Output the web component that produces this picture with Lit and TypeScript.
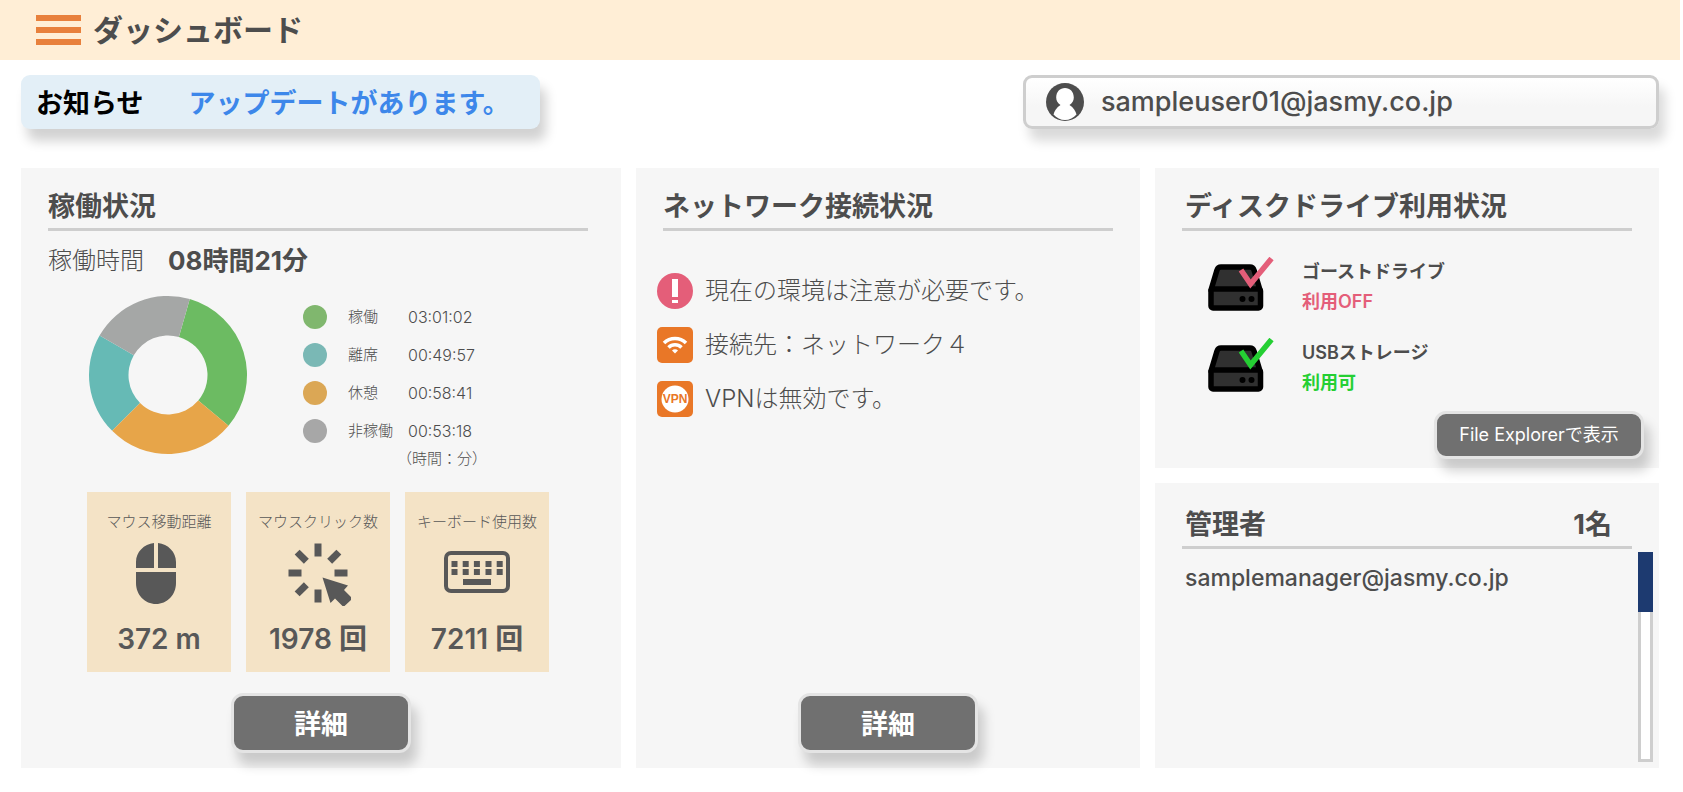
import { LitElement, html, svg, css } from "lit";
import { customElement } from "lit/decorators.js";

const usage = [
  { label: "稼働", time: "03:01:02", start: 16, end: 130, fill: "#6cbb62", dot: "green" },
  { label: "離席", time: "00:49:57", start: 225, end: 300, fill: "#66bab5", dot: "teal" },
  { label: "休憩", time: "00:58:41", start: 130, end: 225, fill: "#e7a549", dot: "amber" },
  { label: "非稼働", time: "00:53:18", start: 300, end: 376, fill: "#a5a7a6", dot: "gray" },
];

const point = (r: number, deg: number) => {
  const a = (deg * Math.PI) / 180;
  return `${(80 + r * Math.sin(a)).toFixed(2)} ${(80 - r * Math.cos(a)).toFixed(2)}`;
};
const slice = (s: number, e: number) =>
  `M${point(79, s)}A79 79 0 0 1 ${point(79, e)}L${point(39.5, e)}A39.5 39.5 0 0 0 ${point(39.5, s)}Z`;

const mouseIcon = html`<svg class="tile-icon" viewBox="0 0 66 66" aria-hidden="true">
  <path d="M28 3v25H10v-6C10 12 18 4 28 3zM32 3c10 1 18 9 18 19v6H32zM10 32h40v11c0 12-9 21-20 21s-20-9-20-21z"/>
</svg>`;
const clickIcon = html`<svg class="tile-icon" viewBox="0 0 66 66" aria-hidden="true">
  <g transform="translate(33 33)">
    ${[0, 45, 90, 180, 225, 270, 315].map(
      (a) => svg`<rect x="-3.500" y="-29.500" width="7" height="13" transform="rotate(${a})"/>`
    )}
    <path d="M4.500 4.500L30 12.500l-4 4.500 8.500 8.500-9 8.500-8.500-8.500-4.500 4.500z"/>
  </g>
</svg>`;
const keyboardIcon = html`<svg class="tile-icon" viewBox="0 0 66 66" aria-hidden="true">
  <rect x="2" y="13" width="62" height="38" rx="5" fill="none" stroke="currentColor" stroke-width="4"/>
  ${[7.500, 18.700, 29.900, 41.500, 52.700].map(
    (x) => svg`<path d="M${x} 21h6v6h-6zM${x} 29h6v6h-6z"/>`
  )}
  <path d="M19 39h28v6H19z"/>
</svg>`;

const activity = [
  { label: "マウス移動距離", value: "372 m", icon: mouseIcon },
  { label: "マウスクリック数", value: "1978 回", icon: clickIcon },
  { label: "キーボード使用数", value: "7211 回", icon: keyboardIcon },
];

const drives = [
  { name: "ゴーストドライブ", state: "利用OFF", tone: "off" },
  { name: "USBストレージ", state: "利用可", tone: "on" },
];

@customElement("app-root")
export class AppRoot extends LitElement {
  static styles = css`
    :host {
      display: flex;
      flex-direction: column;
      min-height: 100vh;
      box-sizing: border-box;
      background: #fff;
      color: #4d4d4d;
      font-family: Inter, "Noto Sans CJK JP", sans-serif;
      font-size: 24px;
      line-height: 36px;
    }
    *, *::before { box-sizing: border-box; }
    h1, h2, p, ul { margin: 0; padding: 0; }
    ul { list-style: none; }
    button { font: inherit; cursor: pointer; }
    .topbar {
      display: flex;
      align-items: center;
      gap: 12px;
      height: 60px;
      margin-right: 3px;
      padding-left: 36px;
      background: #ffeed6;
    }
    .menu {
      display: flex;
      flex-direction: column;
      gap: 6px;
      width: 45px;
      padding: 0;
      border: 0;
      background: none;
    }
    .bar { height: 6px; background: #e8803c; }
    h1 { font-size: 30px; font-weight: 700; line-height: 60px; }
    .strip {
      display: flex;
      justify-content: space-between;
      padding: 15px 24px 39px 21px;
    }
    .notice {
      display: flex;
      align-items: center;
      gap: 45px;
      width: 519px;
      height: 54px;
      padding: 4px 15px 0;
      border-radius: 9px;
      background: #e3eff7;
      box-shadow: 6px 12px 12px rgba(0, 0, 0, 0.18);
      font-size: 27px;
      font-weight: 700;
    }
    .notice-title { color: #000; }
    .notice-link { color: #3d87ea; text-decoration: none; white-space: nowrap; }
    .account {
      display: flex;
      align-items: center;
      gap: 17px;
      width: 636px;
      height: 54px;
      padding: 0 20px;
      border: 3px solid #cecece;
      border-radius: 9px;
      background: linear-gradient(#fff, #f6f6f6 60%);
      box-shadow: 6px 12px 12px rgba(0, 0, 0, 0.15);
      font-size: 27px;
      font-weight: 500;
    }
    .avatar { width: 38px; height: 38px; }
    .board {
      flex: 1;
      display: grid;
      grid-template-columns: 600fr 504fr 504fr;
      gap: 15px;
      padding: 0 24px 24px 21px;
    }
    .stack { display: grid; grid-template-rows: 300px 1fr; gap: 15px; }
    .panel {
      display: flex;
      flex-direction: column;
      padding: 18px 27px 15px;
      background: #f6f6f6;
    }
    .wide .head, .wide .tiles { margin-right: 6px; }
    .head {
      display: flex;
      justify-content: space-between;
      border-bottom: 3px solid #cecece;
    }
    .inset { padding: 0 20px 0 3px; }
    h2, .count { font-size: 27px; font-weight: 700; line-height: 42px; }
    .total { display: flex; gap: 24px; padding-top: 12px; font-weight: 300; }
    .total-value { font-size: 26px; font-weight: 700; }
    .usage { display: flex; gap: 55px; padding: 16px 0 0 40px; }
    .donut { flex: none; width: 160px; height: 160px; }
    .legend {
      display: grid;
      grid-template-columns: 24px 45px auto;
      column-gap: 15px;
      align-items: center;
      align-content: start;
      padding-top: 3px;
      font-size: 15px;
      font-weight: 300;
      line-height: 38px;
    }
    .legend li { display: contents; }
    .legend span { white-space: nowrap; }
    .dot { width: 24px; height: 24px; border-radius: 50%; }
    .name { padding-left: 6px; }
    .time { padding-left: 6px; font-size: 16px; }
    .green { background: #80b76e; }
    .teal { background: #7ab8b5; }
    .amber { background: #dba755; }
    .gray { background: #a7a7a7; }
    .unit { grid-column: 3; margin-left: -5px; line-height: 18px; }
    .tiles { display: flex; justify-content: center; gap: 15px; padding-top: 24px; }
    .tile {
      display: flex;
      flex-direction: column;
      align-items: center;
      width: 144px;
      height: 180px;
      padding-top: 18px;
      background: #f4e3c6;
      color: #585858;
    }
    .tile-label { font-size: 15px; font-weight: 300; line-height: 24px; white-space: nowrap; }
    .tile-icon { width: 66px; height: 66px; margin-top: 6px; fill: currentColor; }
    .tile-value { margin-top: 15px; font-size: 28px; font-weight: 600; }
    .btn {
      align-self: center;
      width: 180px;
      height: 60px;
      margin-top: auto;
      padding: 4px 0 0;
      border: 3px solid #e4e4e4;
      border-radius: 12px;
      background: #707070;
      box-shadow: 6px 12px 12px rgba(0, 0, 0, 0.18);
      color: #fff;
      font-size: 27px;
      font-weight: 700;
    }
    .btn-small {
      align-self: flex-end;
      width: 210px;
      height: 48px;
      padding: 0;
      font-size: 18px;
      font-weight: 400;
    }
    .net { display: grid; row-gap: 18px; padding-top: 42px; font-weight: 300; }
    .net li { display: flex; align-items: center; gap: 12px; margin-left: -6px; }
    .net-icon { width: 36px; height: 36px; }
    .vpn { font: 700 12px "Liberation Sans", sans-serif; fill: #e97727; }
    .drives {
      display: grid;
      row-gap: 21px;
      padding: 26px 0 0 26px;
      font-size: 18px;
      font-weight: 600;
      line-height: 30px;
    }
    .drives li { display: flex; gap: 26px; }
    .drive { width: 68px; height: 57px; }
    .off { color: #e45e79; }
    .on { color: #25cf33; }
    .disk { padding-bottom: 9px; }
    .disk .btn { margin-right: -12px; }
    .admins { padding: 21px 6px 6px 27px; }
    .admins .head { margin-right: 21px; }
    .list { flex: 1; display: flex; justify-content: space-between; padding-top: 3px; }
    .mail { padding: 8px 0 0 3px; font-size: 23px; font-weight: 500; }
    .scroll { width: 15px; border: 3px solid #cecece; background: #fff; }
    .thumb { height: 60px; margin: -3px -3px 0; background: #1d3a70; }
  `;

  render() {
    return html`
      <header class="topbar">
        <button class="menu" aria-label="メニュー">
          <span class="bar"></span><span class="bar"></span><span class="bar"></span>
        </button>
        <h1>ダッシュボード</h1>
      </header>
      <div class="strip">
        <div class="notice">
          <span class="notice-title">お知らせ</span>
          <a class="notice-link" href="#update">アップデートがあります。</a>
        </div>
        <div class="account">
          <svg class="avatar" viewBox="0 0 38 38" aria-hidden="true">
            <circle cx="19" cy="19" r="19" fill="#4d4d4d"/>
            <path fill="#fff" d="M19 5c-5 0-8.800 3.800-8.800 9.500 0 3 1.500 5.500 4.300 7.500C10.500 24.500 8.300 28 7.500 31.500 10.500 35 14.500 37 19 37s8.500-2 11.500-5.500C29.700 28 27.500 24.500 23.500 22c2.800-2 4.300-4.500 4.300-7.500C27.800 8.800 24 5 19 5z"/>
          </svg>
          <span>sampleuser01@jasmy.co.jp</span>
        </div>
      </div>
      <main class="board">
        <section class="panel wide">
          <div class="head"><h2>稼働状況</h2></div>
          <p class="total"><span>稼働時間</span><span class="total-value">08時間21分</span></p>
          <div class="usage">
            <svg class="donut" viewBox="0 0 160 160" aria-hidden="true">
              ${usage.map((u) => svg`<path d=${slice(u.start, u.end)} fill=${u.fill}/>`)}
            </svg>
            <ul class="legend">
              ${usage.map(
                (u) => html`<li>
                  <span class="dot ${u.dot}"></span><span class="name">${u.label}</span><span class="time">${u.time}</span>
                </li>`
              )}
              <li><span class="unit">（時間：分）</span></li>
            </ul>
          </div>
          <div class="tiles">
            ${activity.map(
              (a) => html`<div class="tile">
                <span class="tile-label">${a.label}</span>${a.icon}<span class="tile-value">${a.value}</span>
              </div>`
            )}
          </div>
          <button class="btn">詳細</button>
        </section>
        <section class="panel">
          <div class="head"><h2>ネットワーク接続状況</h2></div>
          <ul class="net">
            <li>
              <svg class="net-icon" viewBox="0 0 36 36" aria-hidden="true">
                <circle cx="18" cy="18" r="18" fill="#e45e79"/>
                <path fill="#fff" d="M15 6h6v18h-6zM15 27h6v3h-6z"/>
              </svg>
              <span>現在の環境は注意が必要です。</span>
            </li>
            <li>
              <svg class="net-icon" viewBox="0 0 36 36" aria-hidden="true">
                <rect width="36" height="36" rx="5" fill="#e97727"/>
                <path fill="none" stroke="#fff" stroke-width="3.500" d="M7 16a15.500 15.500 0 0 1 22 0M11.500 20.500a9.200 9.200 0 0 1 13 0"/>
                <path fill="#fff" d="M15 23.500a4.200 4.200 0 0 1 6 0L18 26.500z"/>
              </svg>
              <span>接続先：ネットワーク４</span>
            </li>
            <li>
              <svg class="net-icon" viewBox="0 0 36 36" aria-hidden="true">
                <rect width="36" height="36" rx="5" fill="#e97727"/>
                <circle cx="18" cy="18" r="13.500" fill="#fff"/>
                <text class="vpn" x="18" y="22" text-anchor="middle">VPN</text>
              </svg>
              <span>VPNは無効です。</span>
            </li>
          </ul>
          <button class="btn">詳細</button>
        </section>
        <div class="stack">
          <section class="panel disk">
            <div class="head inset"><h2>ディスクドライブ利用状況</h2></div>
            <ul class="drives">
              ${drives.map(
                (d) => html`<li>
                  <svg class="drive ${d.tone}" viewBox="0 0 68 57" aria-hidden="true">
                    <g fill="#303030" stroke="#000" stroke-width="5.500" stroke-linejoin="round">
                      <path d="M13 10h29q3 0 4 3l6 20H3l6-20q1-3 4-3z"/>
                      <rect x="3" y="32" width="49.500" height="19" rx="2"/>
                    </g>
                    <circle cx="34.500" cy="42" r="3"/><circle cx="43.500" cy="42" r="3"/>
                    <path d="M33 13L42.500 27 63.500 1.500" fill="none" stroke="currentColor" stroke-width="5.500"/>
                  </svg>
                  <div>
                    <p>${d.name}</p>
                    <p class=${d.tone}>${d.state}</p>
                  </div>
                </li>`
              )}
            </ul>
            <button class="btn btn-small">File Explorerで表示</button>
          </section>
          <section class="panel admins">
            <div class="head inset"><h2>管理者</h2><span class="count">1名</span></div>
            <div class="list">
              <span class="mail">samplemanager@jasmy.co.jp</span>
              <div class="scroll"><div class="thumb"></div></div>
            </div>
          </section>
        </div>
      </main>
    `;
  }
}
